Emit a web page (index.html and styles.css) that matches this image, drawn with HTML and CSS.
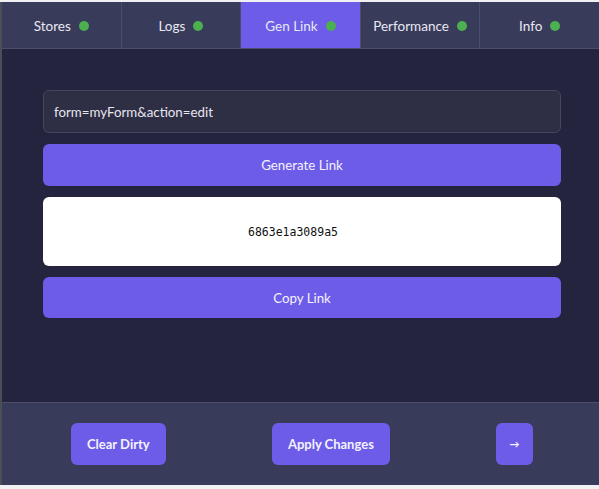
FILE: index.html
```html
<!DOCTYPE html>
<html lang="en">
<head>
  <meta charset="UTF-8" />
  <meta name="viewport" content="width=device-width, initial-scale=1.0" />
  <title>Dev Panel</title>
  <link rel="stylesheet" href="styles.css">
</head>
<body>
  <div class="panel">
    <div class="tabs">
      <div class="tab">Stores <span class="dot"></span></div>
      <div class="tab">Logs <span class="dot"></span></div>
      <div class="tab active">Gen Link <span class="dot"></span></div>
      <div class="tab">Performance <span class="dot"></span></div>
      <div class="tab">Info <span class="dot"></span></div>
    </div>

    <div class="content">
      <input type="text" class="query" value="form=myForm&amp;action=edit" />
      <button class="btn wide">Generate Link</button>
      <div class="link-box">6863e1a3089a5</div>
      <button class="btn wide copy">Copy Link</button>
    </div>

    <div class="footer">
      <button class="btn action">Clear Dirty</button>
      <button class="btn action">Apply Changes</button>
      <button class="btn action arrow">&#8594;</button>
    </div>
  </div>
</body>
</html>
```

FILE: styles.css
```css
* {
  box-sizing: border-box;
}

body {
  margin: 0;
  background: #f1f1f3;
  font-family: 'Lato', 'Noto Sans', sans-serif;
  font-size: 13.5px;
  color: #e8e8f2;
}

.panel {
  margin-top: 2px;
  height: 483px;
  border-left: 2px solid #4d4d58;
  background: #24243f;
  display: flex;
  flex-direction: column;
}

.tabs {
  display: flex;
  height: 47px;
  border-bottom: 1px solid #4a4d6c;
  background: #393b5a;
}

.tab {
  flex: 1;
  display: flex;
  align-items: center;
  justify-content: center;
  gap: 8px;
  padding-top: 2px;
  border-right: 1px solid #4a4d6c;
  color: #e8e8f2;
}

.tab:last-child {
  border-right: none;
}

.tab.active {
  background: #6c5ce7;
}

.dot {
  width: 10px;
  height: 10px;
  border-radius: 50%;
  background: #4caf50;
}

.content {
  flex: 1;
  padding: 41px 38px 0 41px;
  display: flex;
  flex-direction: column;
  gap: 11px;
}

.query {
  height: 43px;
  padding: 0 10px;
  border: 1px solid #45465e;
  border-radius: 6px;
  background: #2e2e45;
  color: #e6e6ee;
  font-family: inherit;
  font-size: 13.3px;
}

.btn {
  border: none;
  border-radius: 6px;
  background: #6c5ce7;
  color: #f4f2ff;
  font-family: inherit;
  font-size: 13.3px;
  cursor: pointer;
}

.btn.wide {
  height: 42px;
}

.btn.copy {
  height: 41px;
}

.link-box {
  height: 69px;
  padding-right: 18px;
  border-radius: 6px;
  background: #ffffff;
  color: #111;
  display: flex;
  align-items: center;
  justify-content: center;
  font-family: 'DejaVu Sans Mono', monospace;
  font-size: 11.5px;
}

.footer {
  height: 83px;
  border-top: 1px solid #4a4d6c;
  background: #393b5a;
  display: flex;
  align-items: center;
  justify-content: space-between;
  padding: 0 66px 0 69px;
}

.btn.action {
  height: 42px;
  padding: 0 16px;
  font-weight: 700;
  font-size: 13px;
}

.btn.arrow {
  width: 37px;
  padding: 0;
  font-size: 10px;
}
```
